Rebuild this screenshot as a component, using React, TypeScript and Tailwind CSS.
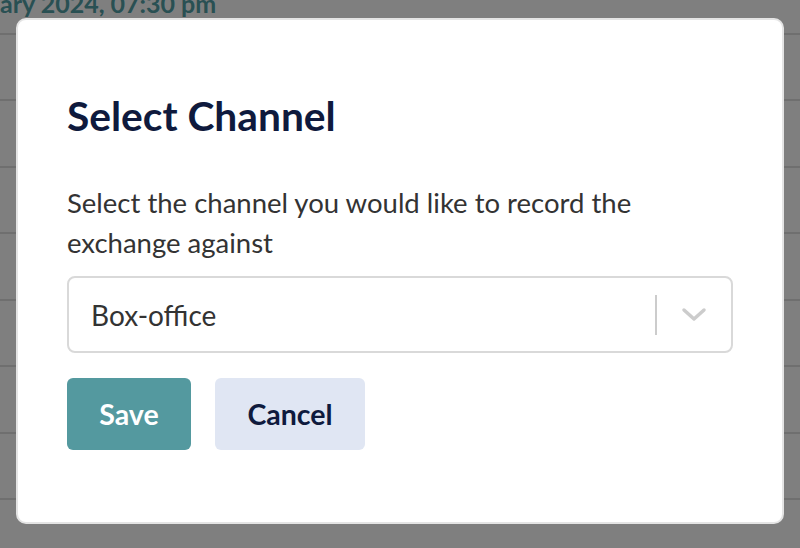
import React from "react";

export default function App() {
  const lines = [34, 100, 167, 233, 300, 366, 433, 499];
  return (
    <div className="relative w-[800px] h-[548px] overflow-hidden bg-white" style={{ fontFamily: "Lato, 'Noto Sans', sans-serif" }}>
      {/* background page */}
      <div className="absolute left-0 top-[-13px] whitespace-nowrap text-[25px] font-bold text-[#52a0a6] leading-[32px]">
        ary 2024, 07:30 pm
      </div>
      {lines.map((y) => (
        <div key={y} className="absolute left-0 w-full h-[2px] bg-[#dedede]" style={{ top: y - 1 }} />
      ))}
      {/* overlay */}
      <div className="absolute inset-0 bg-black/50" />
      {/* modal */}
      <div className="absolute left-[16px] top-[18px] w-[768px] h-[506px] rounded-[10px] border-2 border-[#e4e4e4] bg-white px-[49px] pt-[72px]">
        <h2 className="text-[40.7px] leading-[48px] font-bold text-[#0f1a3d]">Select Channel</h2>
        <p className="mt-[43px] text-[27.5px] leading-[40px] text-[#333333]">
          Select the channel you would like to record the
          <br />
          exchange against
        </p>
        <div className="mt-[13px] flex h-[77px] items-center rounded-[8px] border-2 border-[#d9d9d9] bg-white">
          <span className="flex-1 pl-[22px] text-[28px] leading-[36px] text-[#333333]">Box-office</span>
          <div className="h-[40px] w-[2px] bg-[#cccccc]" />
          <div className="flex w-[74px] items-center justify-center">
            <svg width="26" height="16" viewBox="0 0 26 16" fill="none">
              <path d="M3 3 L13 12 L23 3" stroke="#cccccc" strokeWidth="3.5" strokeLinecap="round" strokeLinejoin="round" />
            </svg>
          </div>
        </div>
        <div className="mt-[25px] flex gap-[24px]">
          <button className="h-[72px] w-[124px] rounded-[6px] bg-[#54999f] text-[28.5px] font-bold text-white">Save</button>
          <button className="h-[72px] w-[150px] rounded-[6px] bg-[#e0e6f3] text-[28.5px] font-bold text-[#0f1a3d]">Cancel</button>
        </div>
      </div>
    </div>
  );
}
